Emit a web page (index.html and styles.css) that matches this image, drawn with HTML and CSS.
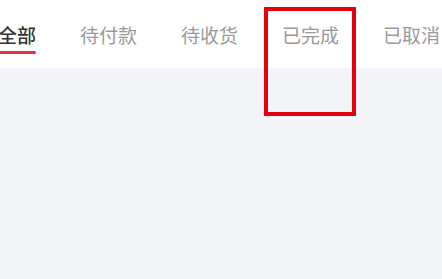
FILE: index.html
```html
<!DOCTYPE html>
<html lang="zh">
<head>
<meta charset="utf-8">
<link rel="stylesheet" href="styles.css">
</head>
<body>
<div class="page">
  <nav class="tabs">
    <div class="tab active"><span class="label">全部</span><span class="bar"></span></div>
    <div class="tab"><span class="label">待付款</span></div>
    <div class="tab"><span class="label">待收货</span></div>
    <div class="tab"><span class="label">已完成</span></div>
    <div class="tab"><span class="label">已取消</span></div>
  </nav>
  <div class="highlight"></div>
</div>
</body>
</html>
```
FILE: styles.css
```css
html, body {
  margin: 0;
  padding: 0;
}
body {
  background: #f3f5f8;
  font-family: "Noto Sans CJK SC", "Noto Sans", sans-serif;
  width: 442px;
  height: 279px;
  overflow: hidden;
}
.page {
  position: relative;
  width: 442px;
  height: 279px;
}
.tabs {
  display: flex;
  gap: 44px;
  height: 68px;
  background: #ffffff;
  box-sizing: border-box;
  padding-top: 25px;
  margin-left: -2px;
  white-space: nowrap;
}
.tab {
  display: flex;
  flex-direction: column;
  align-items: center;
  flex-shrink: 0;
}
.label {
  font-size: 19px;
  line-height: 20px;
  color: #9a9a9a;
}
.tab.active .label {
  color: #333333;
  font-weight: 500;
}
.bar {
  margin-top: 6px;
  width: 38px;
  height: 3px;
  border-radius: 2px;
  background: #e0344c;
}
.highlight {
  position: absolute;
  left: 264px;
  top: 7px;
  width: 92px;
  height: 109px;
  box-sizing: border-box;
  border: 4px solid #e6000e;
}
```
